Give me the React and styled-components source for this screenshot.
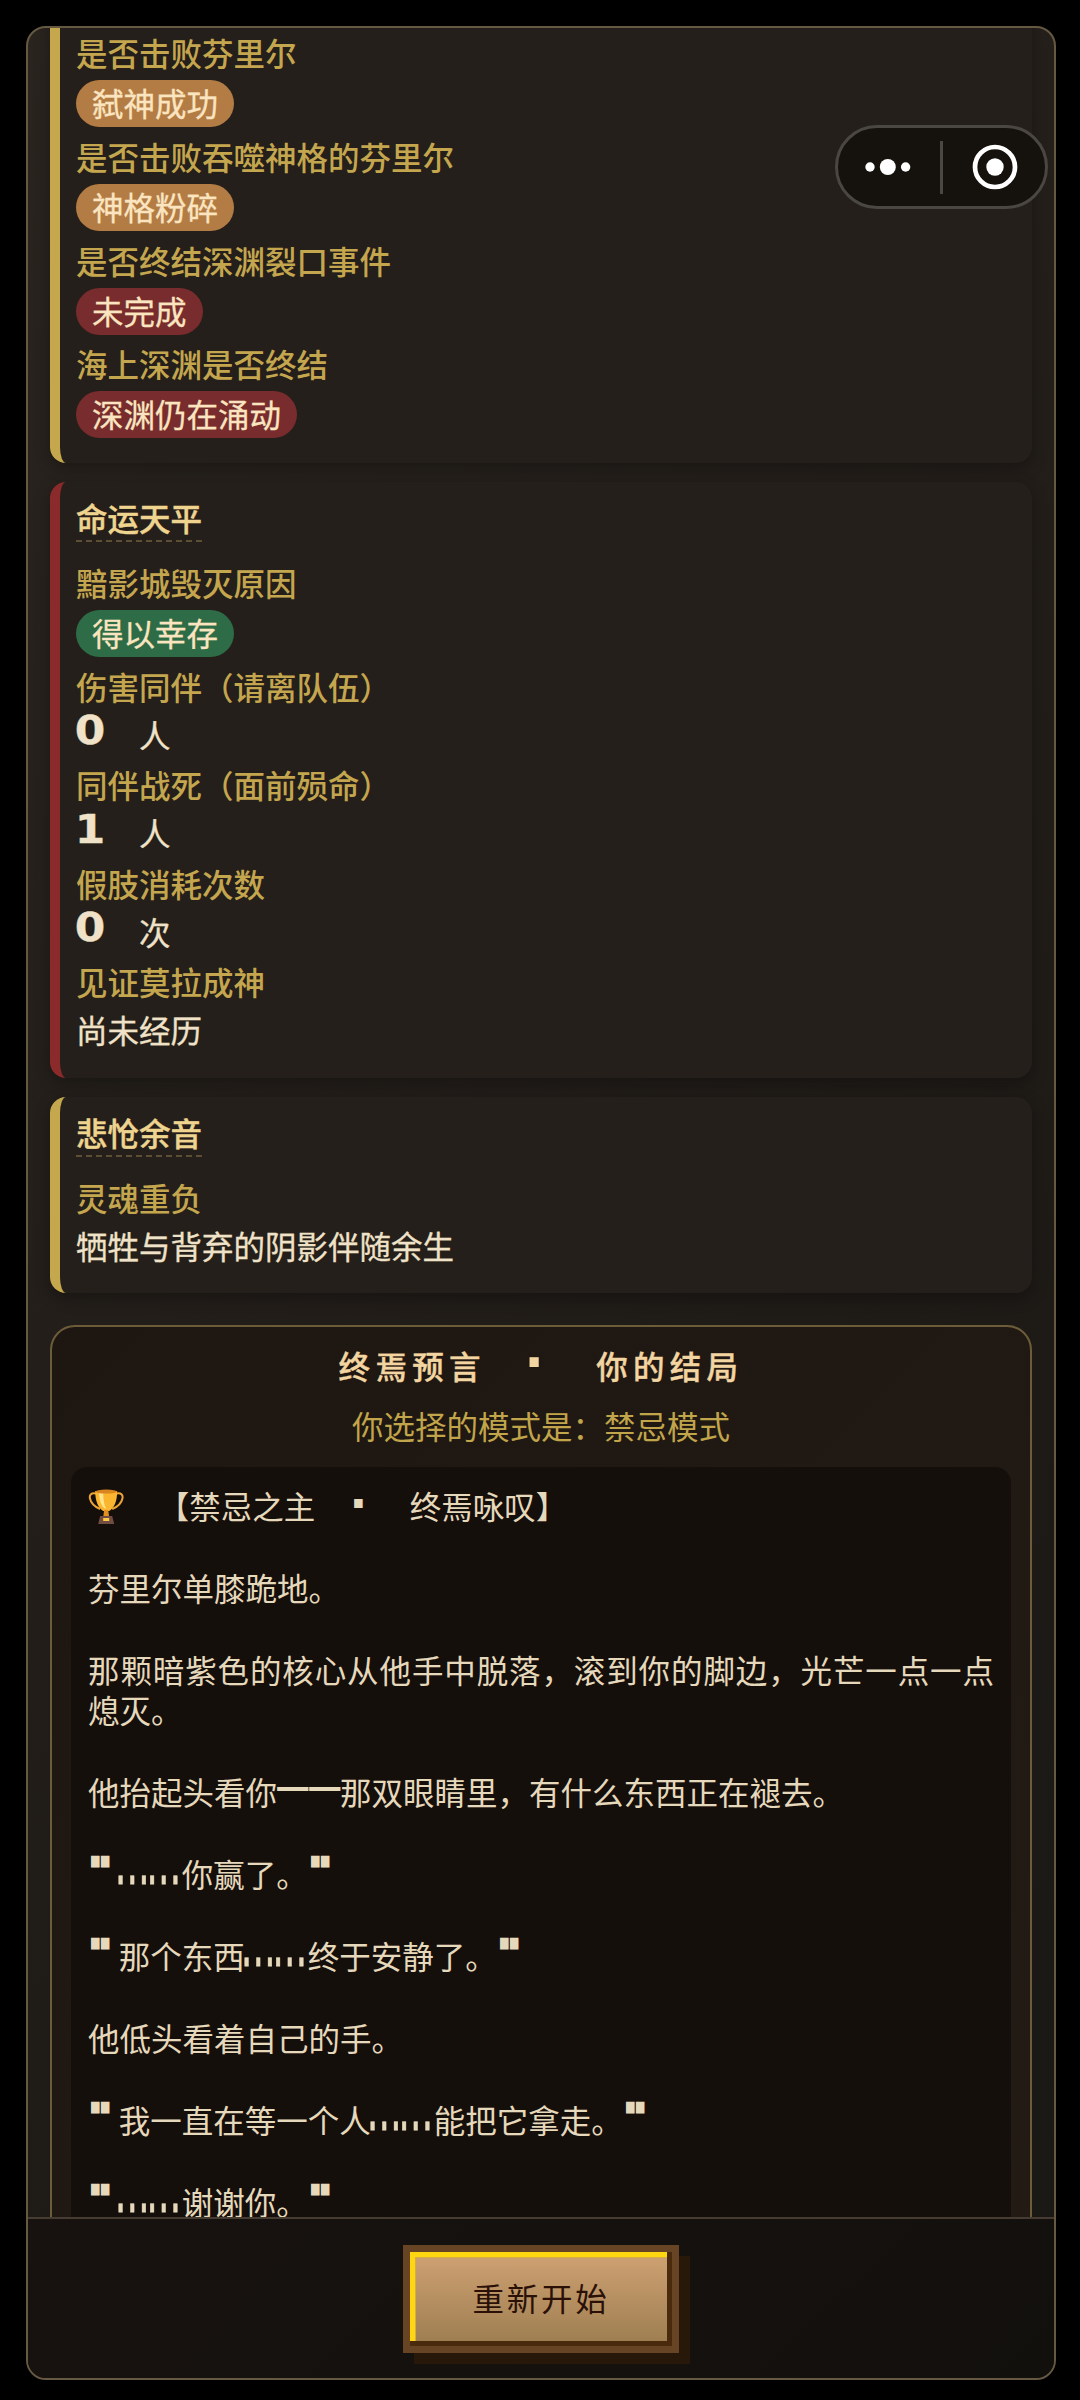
import styled, { createGlobalStyle, css } from 'styled-components';

const GlobalStyle = createGlobalStyle`
  * {
    box-sizing: border-box;
  }

  body {
    margin: 0;
    background: #000;
    font-family: 'Noto Sans CJK SC', sans-serif;
    font-size: 31.5px;
    color: #f0e2c8;
  }
`;

const Page = styled.div`
  height: 2400px;
  padding: 26px 24px 20px 26px;
  overflow: hidden;
  background: #000;
`;

const Panel = styled.main`
  display: flex;
  flex-direction: column;
  height: 2354px;
  border: 2px solid #665942;
  border-radius: 20px;
  overflow: hidden;
  background: linear-gradient(135deg, #2a241f, #1f1b17 60%, #191815);
`;

const ScrollArea = styled.div`
  flex: 1;
  min-height: 0;
  padding: 0 22px;
  overflow: hidden;
`;

const Card = styled.section`
  margin-bottom: 19px;
  padding: 16px;
  border-left: 10px solid ${({ $tone }) => ($tone === 'blood' ? '#8b2a2b' : '#c5a84d')};
  border-radius: 16px;
  background: #241f1a;
  box-shadow: 0 5px 16px rgba(0, 0, 0, 0.3);

  ${({ $scrolled }) =>
    $scrolled &&
    css`
      margin-top: -30px;
      padding: 36px 16px 14px;
    `}
`;

const CardTitle = styled.h2`
  width: fit-content;
  height: 44px;
  margin: 0 0 22px;
  border-bottom: 2px dashed #5d4f34;
  font-size: 31.5px;
  font-weight: 500;
  line-height: 38px;
  color: #eed48f;
  -webkit-text-stroke: 0.4px;
`;

const Item = styled.div`
  height: ${({ $tagged }) => ($tagged ? 103.75 : 98.5)}px;
`;

const Label = styled.div`
  height: 42px;
  font-weight: 500;
  line-height: 37px;
  color: #c4a64f;
`;

const Value = styled.div`
  padding-top: 6px;
  line-height: 37px;
  word-spacing: 24.4px;
  -webkit-text-stroke: 0.3px;
`;

const tagColors = {
  bronze: '#b47c45',
  blood: '#782c2d',
  green: '#2e6c47',
};

const Tag = styled.div`
  width: fit-content;
  height: 47px;
  margin-top: 4px;
  padding: 0 16px;
  border-radius: 24px;
  background: ${({ $color }) => tagColors[$color]};
  line-height: 44px;
  color: #fae5c0;
  -webkit-text-stroke: 0.3px;
`;

const Prophecy = styled.section`
  height: 1400px;
  margin-top: 32px;
  padding: 17px 19px;
  border: 2px solid #6d5c39;
  border-radius: 25px;
  background: linear-gradient(135deg, #1e1711, #241b15);
  text-align: center;
`;

const ProphecyTitle = styled.h2`
  margin: 0;
  font-size: 31.5px;
  font-weight: 500;
  line-height: 42px;
  letter-spacing: 5.3px;
  word-spacing: 24.4px;
  color: #f2d5a0;
  -webkit-text-stroke: 0.4px;
`;

const Mode = styled.div`
  margin: 19px 0 21px;
  line-height: 41px;
  color: #c1a54b;
`;

const Story = styled.div`
  height: 1200px;
  padding: 17.5px 17px;
  border-radius: 16px;
  background: #140f0b;
  line-height: 1.3;
  text-align: justify;
  white-space: pre-wrap;
  word-spacing: 24.4px;
  color: #e6d8bb;
`;

// Blocky full-width glyphs, each one takes a whole character cell
const Glyph = styled.span`
  display: inline-block;
  width: 31.5px;
  height: 0;
  font-family: 'DejaVu Sans', sans-serif;
  font-weight: 700;
  line-height: 0;
  letter-spacing: 0;
  text-align: center;
  white-space: nowrap;
`;

const Digit = styled(Glyph)`
  width: 28px;
  margin-right: 3.5px;
  font-size: 38.5px;
  vertical-align: 3.5px;
  transform: scaleX(1.14);
`;

const Dot = styled(Glyph)`
  margin-right: ${({ $wide }) => ($wide ? 5.3 : 0)}px;
  padding-right: 8.5px;
  font-size: ${({ $wide }) => ($wide ? 52 : 48)}px;
  vertical-align: -1px;
  -webkit-text-stroke: 0;
`;

const Quote = styled(Glyph)`
  width: 30.7px;
  padding-right: 4.5px;
  font-size: 34px;
  vertical-align: 5px;
  transform: scaleX(1.35);
  -webkit-text-stroke: 2.4px;
`;

const Ellipsis = styled(Glyph)`
  margin: 0 4px 0 -4px;
  font-size: 35px;
  font-weight: 400;
  text-align: left;
  vertical-align: 3px;
  transform: scaleY(1.9);
  transform-origin: 0 12.1px;
  -webkit-text-stroke: 0.4px;
`;

const Dash = styled(Glyph)`
  font-size: 31.5px;
  vertical-align: 7.5px;
  transform: scaleX(1.11);
`;

const TrophyIcon = styled.svg`
  width: 38.4px;
  height: 36px;
  padding-right: 2px;
  vertical-align: -6px;
`;

const Footer = styled.footer`
  display: flex;
  justify-content: center;
  align-items: flex-start;
  height: 161px;
  padding-top: 26px;
  border-top: 2px solid #463c32;
  background: linear-gradient(135deg, #17120f, #12100d);
`;

const RestartButton = styled.button`
  width: 276px;
  height: 108px;
  padding: 0 0 4px;
  border: 7px solid #664424;
  border-radius: 0;
  background: linear-gradient(#d0a273, #9c7d50);
  box-shadow:
    inset -5px -5px 0 #4a2a0c,
    inset 5px 5px 0 #ffd60f,
    inset 6px 6px 0 #d3ae40,
    11px 11px 0 #281809;
  font-family: inherit;
  font-size: 31.5px;
  font-weight: 400;
  letter-spacing: 2.7px;
  color: #2a1007;
`;

const Capsule = styled.div`
  position: absolute;
  top: 125px;
  left: 835px;
  display: flex;
  align-items: center;
  justify-content: space-between;
  width: 213px;
  height: 84px;
  padding: 0 27px;
  border: 3px solid #4a4641;
  border-radius: 42px;
  background: #15120e;
`;

const Divider = styled.div`
  width: 3px;
  height: 53px;
  background: #4b4843;
`;

const Trophy = () => (
  <TrophyIcon viewBox="0 0 36 36" role="img" aria-label="trophy">
    <path d="M8 4.5C-2 2 0 15 12 20M28 4.5c10-2.500 8 10.500-4 15.500" fill="none" stroke="#eda437" strokeWidth="2" />
    <path d="M7 2h22c0 10-3 17-8 20h-6C10 19 7 12 7 2z" fill="#fcb52e" />
    <path d="M11 4h4c0 7 1 12 3 16-5-2-7-9-7-16z" fill="#ffe58a" />
    <ellipse cx="18" cy="2.6" rx="11" ry="2" fill="#d9861f" />
    <path d="M16 21h4l1 7h-6z" fill="#e08f22" />
    <path d="M12 27h12l2 8H10z" fill="#704c43" />
    <path d="M15 29h6v3h-6z" fill="#ffc93f" />
  </TrophyIcon>
);

const fullWidthGlyphs = { '"': Quote, '…': Ellipsis, '—': Dash, '·': Dot };

const renderStory = (text) =>
  text.split(/(["…—·🏆])/u).map((part, i) => {
    if (part === '🏆') return <Trophy key={i} />;
    const Part = fullWidthGlyphs[part];
    return Part ? <Part key={i}>{part}</Part> : part;
  });

const deeds = [
  { label: '是否击败芬里尔', tag: '弑神成功', color: 'bronze' },
  { label: '是否击败吞噬神格的芬里尔', tag: '神格粉碎', color: 'bronze' },
  { label: '是否终结深渊裂口事件', tag: '未完成', color: 'blood' },
  { label: '海上深渊是否终结', tag: '深渊仍在涌动', color: 'blood' },
];

const fate = [
  { label: '黯影城毁灭原因', tag: '得以幸存', color: 'green' },
  { label: '伤害同伴（请离队伍）', count: 0, value: ' 人' },
  { label: '同伴战死（面前殒命）', count: 1, value: ' 人' },
  { label: '假肢消耗次数', count: 0, value: ' 次' },
  { label: '见证莫拉成神', value: '尚未经历' },
];

const echoes = [{ label: '灵魂重负', value: '牺牲与背弃的阴影伴随余生' }];

const story = [
  '🏆 【禁忌之主 · 终焉咏叹】',
  '芬里尔单膝跪地。',
  '那颗暗紫色的核心从他手中脱落，滚到你的脚边，光芒一点一点熄灭。',
  '他抬起头看你——那双眼睛里，有什么东西正在褪去。',
  '"……你赢了。"',
  '"那个东西……终于安静了。"',
  '他低头看着自己的手。',
  '"我一直在等一个人……能把它拿走。"',
  '"……谢谢你。"',
].join('\n\n');

const ItemList = ({ items }) =>
  items.map(({ label, tag, color, count, value }) => (
    <Item key={label} $tagged={Boolean(tag)}>
      <Label>{label}</Label>
      {tag ? (
        <Tag $color={color}>{tag}</Tag>
      ) : (
        <Value>
          {count !== undefined && <Digit>{count}</Digit>}
          {value}
        </Value>
      )}
    </Item>
  ));

const App = () => (
  <Page>
    <GlobalStyle />
    <Panel>
      <ScrollArea>
        <Card $scrolled>
          <ItemList items={deeds} />
        </Card>
        <Card $tone="blood">
          <CardTitle>命运天平</CardTitle>
          <ItemList items={fate} />
        </Card>
        <Card>
          <CardTitle>悲怆余音</CardTitle>
          <ItemList items={echoes} />
        </Card>
        <Prophecy>
          <ProphecyTitle>
            终焉预言 <Dot $wide>·</Dot> 你的结局
          </ProphecyTitle>
          <Mode>你选择的模式是：禁忌模式</Mode>
          <Story>{renderStory(story)}</Story>
        </Prophecy>
      </ScrollArea>
      <Footer>
        <RestartButton type="button">重新开始</RestartButton>
      </Footer>
    </Panel>
    <Capsule>
      <svg width="46" height="18" viewBox="0 0 46 18" fill="#fff">
        <circle cx="5" cy="9" r="4.7" />
        <circle cx="22.8" cy="9" r="8" />
        <circle cx="40.6" cy="9" r="4.7" />
      </svg>
      <Divider />
      <svg width="46" height="46" viewBox="0 0 46 46">
        <circle cx="23" cy="23" r="20" fill="none" stroke="#fff" strokeWidth="4.7" />
        <circle cx="23" cy="23" r="8.7" fill="#fff" />
      </svg>
    </Capsule>
  </Page>
);

export default App;
